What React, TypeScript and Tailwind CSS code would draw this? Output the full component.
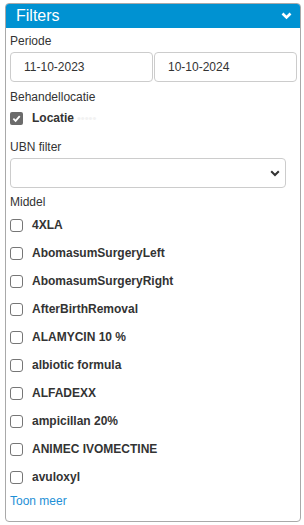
import React from "react";

const items = [
  "4XLA",
  "AbomasumSurgeryLeft",
  "AbomasumSurgeryRight",
  "AfterBirthRemoval",
  "ALAMYCIN 10 %",
  "albiotic formula",
  "ALFADEXX",
  "ampicillan 20%",
  "ANIMEC IVOMECTINE",
  "avuloxyl",
];

function Box({ checked }: { checked?: boolean }) {
  if (checked) {
    return (
      <span className="w-[13px] h-[13px] rounded-[2px] bg-[#6b6b6b] flex items-center justify-center shrink-0">
        <svg width="9" height="9" viewBox="0 0 10 10">
          <path d="M1.5 5.2 L4 7.6 L8.6 2.4" stroke="white" strokeWidth="2" fill="none" />
        </svg>
      </span>
    );
  }
  return <span className="w-[13px] h-[13px] rounded-[3px] border border-[#767676] bg-white shrink-0" />;
}

export default function App() {
  return (
    <div className="w-[304px] h-[525px] bg-white pt-[3px] pl-[5px]" style={{ fontFamily: '"Liberation Sans", Arial, sans-serif' }}>
      <div className="w-[296px] h-[519px] border border-[#a9a9a9] rounded-[4px] overflow-hidden flex flex-col">
        <div className="h-[24px] bg-[#0092d2] flex items-center justify-between pl-[10px] pr-[8px] shrink-0">
          <span className="text-white text-[16px] leading-none">Filters</span>
          <svg width="11" height="8" viewBox="0 0 11 8">
            <path d="M1.5 1.5 L5.5 5.5 L9.5 1.5" stroke="white" strokeWidth="2.6" fill="none" />
          </svg>
        </div>
        <div className="flex flex-col pl-[4px] pr-[3px] text-[#333]">
          <div className="h-[16px] mt-[5px] text-[12px] leading-[16px]">Periode</div>
          <div className="flex mt-[3px] gap-[1px]">
            <div className="w-[143px] h-[30px] border border-[#ccc] rounded-[4px] flex items-center pl-[13px] text-[12px] text-[#333]">11-10-2023</div>
            <div className="w-[143px] h-[30px] border border-[#ccc] rounded-[4px] flex items-center pl-[13px] text-[12px] text-[#333]">10-10-2024</div>
          </div>
          <div className="h-[16px] mt-[7px] text-[12px] leading-[16px]">Behandellocatie</div>
          <div className="flex items-center h-[18px] mt-[4px] gap-[9px]">
            <Box checked />
            <span className="text-[12px] font-bold">Locatie</span>
            <span className="text-[11px] text-[#f2f2f2] -ml-[6px]">•••••</span>
          </div>
          <div className="h-[16px] mt-[12px] text-[12px] leading-[16px]">UBN filter</div>
          <div className="w-[276px] h-[30px] mt-[3px] border border-[#ccc] rounded-[4px] flex items-center justify-end pr-[5px]">
            <svg width="10" height="7" viewBox="0 0 10 7">
              <path d="M1.2 1.2 L5 5 L8.8 1.2" stroke="#333" strokeWidth="2" fill="none" />
            </svg>
          </div>
          <div className="h-[16px] mt-[6px] text-[12px] leading-[16px]">Middel</div>
          <div className="flex flex-col mt-[1px]">
            {items.map((it) => (
              <div key={it} className="h-[28px] flex items-center gap-[9px]">
                <Box />
                <span className="text-[12px] font-bold text-[#333]">{it}</span>
              </div>
            ))}
          </div>
          <div className="h-[16px] mt-[2px] text-[12px] leading-[16px] text-[#1e90d6]">Toon meer</div>
        </div>
      </div>
    </div>
  );
}
